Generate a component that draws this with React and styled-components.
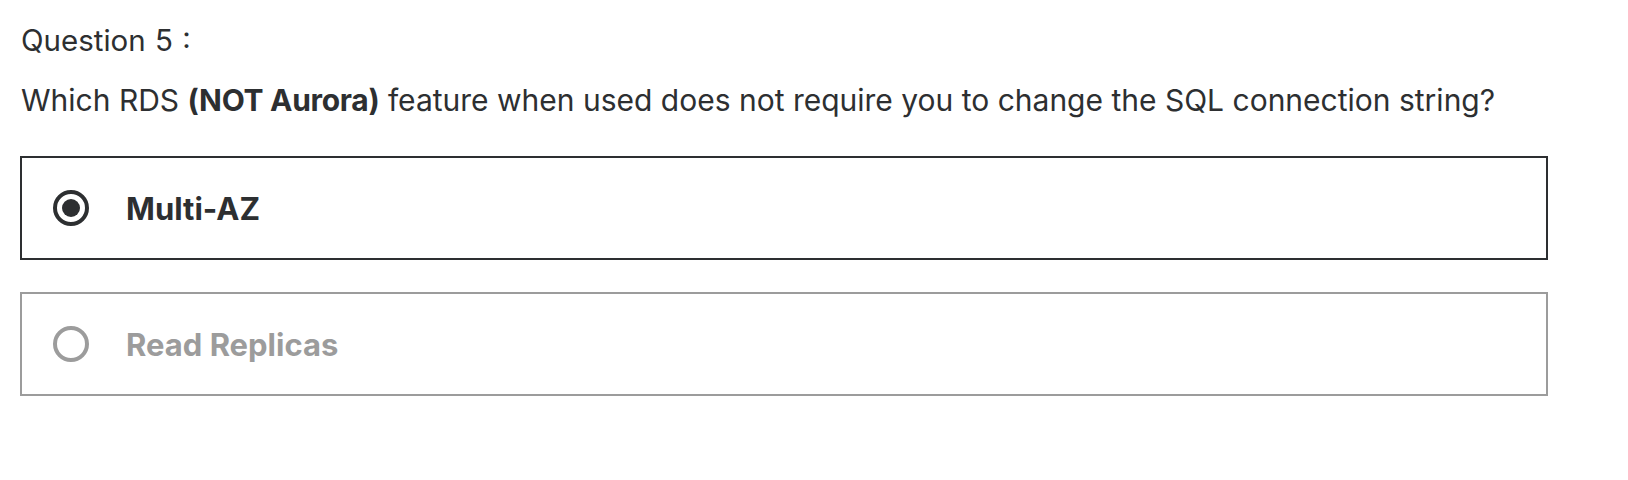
import React, { useState } from "react";
import styled, { createGlobalStyle } from "styled-components";

const GlobalStyle = createGlobalStyle`
  body {
    margin: 0;
    background: #fff;
    font-family: Inter, "Liberation Sans", Arial, sans-serif;
    color: #2d2f31;
  }
`;

const Page = styled.div`
  padding: 22px 20px 0 20px;
  width: 1528px;
`;

const Label = styled.div`
  font-size: 29.5px;
  line-height: 36px;
  margin-left: 1px;
  word-spacing: 1px;
`;

const Prompt = styled.p`
  font-size: 30px;
  line-height: 36px;
  margin: 24px 0 38px 1px;
  strong {
    font-weight: 700;
    letter-spacing: -0.3px;
  }
`;

const Options = styled.div`
  display: flex;
  flex-direction: column;
  gap: 32px;
`;

const Option = styled.label`
  display: flex;
  align-items: center;
  gap: 37px;
  height: 104px;
  box-sizing: border-box;
  padding: 0 31px;
  border: 2px solid ${(p) => (p.selected ? "#2d2f31" : "#9c9c9c")};
  color: ${(p) => (p.selected ? "#2d2f31" : "#9c9c9c")};
  cursor: pointer;
`;

const Radio = styled.span`
  position: relative;
  width: 36px;
  height: 36px;
  box-sizing: border-box;
  border-radius: 50%;
  border: 4px solid currentColor;
  flex-shrink: 0;
  &::after {
    content: "";
    display: ${(p) => (p.checked ? "block" : "none")};
    position: absolute;
    left: 5px;
    top: 5px;
    width: 18px;
    height: 18px;
    border-radius: 50%;
    background: currentColor;
  }
`;

const OptionText = styled.span`
  font-size: 31px;
  font-weight: 700;
`;

const answers = ["Multi-AZ", "Read Replicas"];

export default function App() {
  const [picked, setPicked] = useState(0);
  return (
    <Page>
      <GlobalStyle />
      <Label>Question 5 :</Label>
      <Prompt>
        Which RDS <strong>(NOT Aurora)</strong> feature when used does not require you to change the SQL connection string?
      </Prompt>
      <Options>
        {answers.map((a, i) => (
          <Option key={a} selected={i === picked} onClick={() => setPicked(i)}>
            <Radio checked={i === picked} />
            <OptionText>{a}</OptionText>
          </Option>
        ))}
      </Options>
    </Page>
  );
}
